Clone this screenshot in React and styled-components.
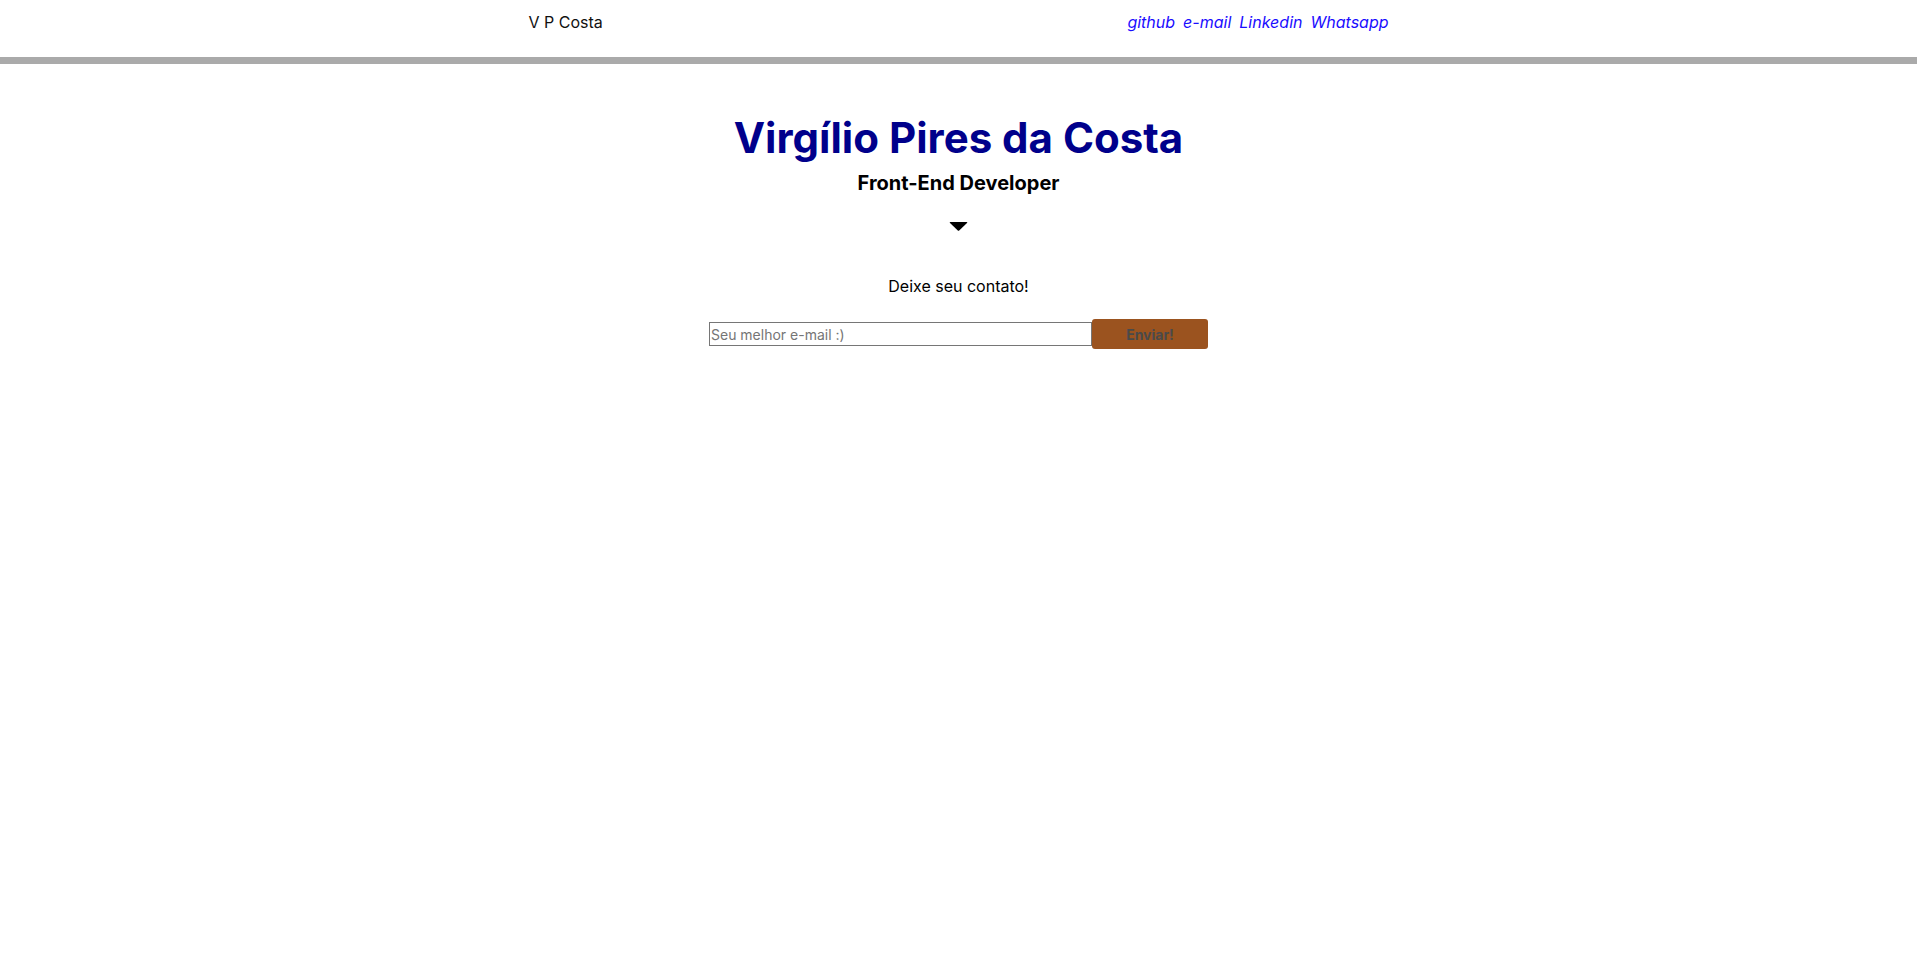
import React from 'react'
import styled, { createGlobalStyle } from 'styled-components'

const GlobalStyle = createGlobalStyle`
  body {
    margin: 0;
    font-family: 'Inter', 'Open Sans', sans-serif;
    background: #fff;
    color: #000;
  }
`

const Header = styled.header`
  height: 57px;
  border-bottom: 7px solid #aaa;
`

const HeaderInner = styled.div`
  width: 860px;
  margin: 0 auto;
  padding-top: 10px;
  display: flex;
  justify-content: space-between;
  line-height: 24px;
`

const Brand = styled.span`
  font-size: 16px;
  color: #111;
`

const Links = styled.nav`
  display: flex;
  gap: 8px;
`

const NavLink = styled.a`
  font-size: 16px;
  font-style: italic;
  color: #1a0dff;
  text-decoration: none;
`

const Main = styled.main`
  display: flex;
  flex-direction: column;
  align-items: center;
  padding-top: 46px;
`

const Title = styled.h1`
  margin: 0;
  font-size: 42px;
  line-height: 56px;
  font-weight: 700;
  color: #00008b;
`

const Subtitle = styled.h2`
  margin: 2px 0 0;
  font-size: 20px;
  line-height: 30px;
  font-weight: 700;
`

const Caret = styled.svg`
  margin-top: 24px;
  width: 19px;
  height: 9px;
`

const Prompt = styled.p`
  margin: 43px 0 0;
  font-size: 16px;
  line-height: 24px;
`

const Form = styled.form`
  margin-top: 21px;
  display: flex;
  align-items: center;
`

const EmailInput = styled.input`
  box-sizing: border-box;
  width: 383px;
  height: 24px;
  padding: 0 1px;
  border: 1px solid #767676;
  font-family: inherit;
  font-size: 14px;
  &::placeholder {
    color: #757575;
  }
`

const SendButton = styled.button`
  width: 116px;
  height: 30px;
  border: none;
  border-radius: 3px;
  background: #9b531f;
  color: #4a4a4a;
  font-family: inherit;
  font-size: 14px;
  font-weight: 700;
`

export default function App() {
  return (
    <>
      <GlobalStyle />
      <Header>
        <HeaderInner>
          <Brand>V P Costa</Brand>
          <Links>
            <NavLink href="#">github</NavLink>
            <NavLink href="#">e-mail</NavLink>
            <NavLink href="#">Linkedin</NavLink>
            <NavLink href="#">Whatsapp</NavLink>
          </Links>
        </HeaderInner>
      </Header>
      <Main>
        <Title>Virgílio Pires da Costa</Title>
        <Subtitle>Front-End Developer</Subtitle>
        <Caret viewBox="0 0 19 9">
          <path d="M1.5 0 H17.5 Q19 0 18 1 L10.2 8.4 Q9.5 9 8.8 8.4 L1 1 Q0 0 1.5 0 Z" fill="#000" />
        </Caret>
        <Prompt>Deixe seu contato!</Prompt>
        <Form onSubmit={e => e.preventDefault()}>
          <EmailInput type="email" placeholder="Seu melhor e-mail :)" />
          <SendButton type="submit">Enviar!</SendButton>
        </Form>
      </Main>
    </>
  )
}
